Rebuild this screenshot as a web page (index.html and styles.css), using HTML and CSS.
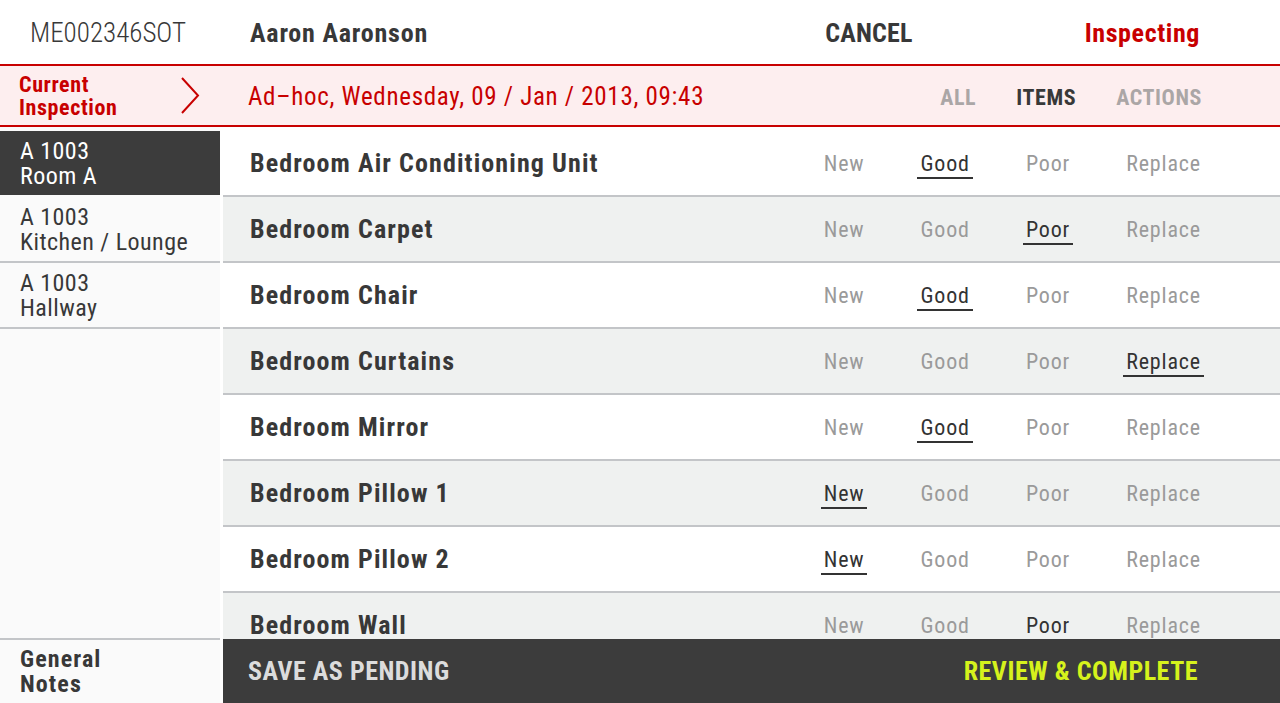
FILE: index.html
```html
<!DOCTYPE html>
<html lang="en">
<head>
    <meta charset="UTF-8">
    <meta name="viewport" content="width=device-width, initial-scale=1.0">
    <title>Inspection - Room A</title>
    <link rel="stylesheet" href="styles.css">
</head>
<body>
<div class="app">
    <header class="topbar">
        <div class="ref">ME002346SOT</div>
        <div class="tenant">Aaron Aaronson</div>
        <div class="cancel">CANCEL</div>
        <div class="status">Inspecting</div>
    </header>

    <div class="band">
        <div class="current">
            <span>Current<br>Inspection</span>
            <svg class="chevron" width="19" height="37" viewBox="0 0 19 37">
                <polyline points="1,1 17,18.5 1,36" fill="none" stroke="#c80000" stroke-width="2"/>
            </svg>
        </div>
        <div class="date">Ad&ndash;hoc, Wednesday, 09 / Jan / 2013, 09:43</div>
        <nav class="tabs">
            <span>ALL</span>
            <span class="on">ITEMS</span>
            <span>ACTIONS</span>
        </nav>
    </div>

    <div class="body">
        <aside class="rooms">
            <ul class="room-list">
                <li class="room active">A 1003<br>Room A</li>
                <li class="room">A 1003<br>Kitchen / Lounge</li>
                <li class="room">A 1003<br>Hallway</li>
            </ul>
            <div class="notes">General<br>Notes</div>
        </aside>

        <main class="items">
            <ul class="item-list">
                <li class="item">
                    <span class="name">Bedroom Air Conditioning Unit</span>
                    <span class="opts"><span>New</span><span class="sel">Good</span><span>Poor</span><span>Replace</span></span>
                </li>
                <li class="item">
                    <span class="name">Bedroom Carpet</span>
                    <span class="opts"><span>New</span><span>Good</span><span class="sel">Poor</span><span>Replace</span></span>
                </li>
                <li class="item">
                    <span class="name">Bedroom Chair</span>
                    <span class="opts"><span>New</span><span class="sel">Good</span><span>Poor</span><span>Replace</span></span>
                </li>
                <li class="item">
                    <span class="name">Bedroom Curtains</span>
                    <span class="opts"><span>New</span><span>Good</span><span>Poor</span><span class="sel">Replace</span></span>
                </li>
                <li class="item">
                    <span class="name">Bedroom Mirror</span>
                    <span class="opts"><span>New</span><span class="sel">Good</span><span>Poor</span><span>Replace</span></span>
                </li>
                <li class="item">
                    <span class="name">Bedroom Pillow 1</span>
                    <span class="opts"><span class="sel">New</span><span>Good</span><span>Poor</span><span>Replace</span></span>
                </li>
                <li class="item">
                    <span class="name">Bedroom Pillow 2</span>
                    <span class="opts"><span class="sel">New</span><span>Good</span><span>Poor</span><span>Replace</span></span>
                </li>
                <li class="item">
                    <span class="name">Bedroom Wall</span>
                    <span class="opts"><span>New</span><span>Good</span><span class="picked">Poor</span><span>Replace</span></span>
                </li>
            </ul>
            <footer class="actions">
                <span class="pending">SAVE AS PENDING</span>
                <span class="complete">REVIEW &amp; COMPLETE</span>
            </footer>
        </main>
    </div>
</div>
</body>
</html>
```

FILE: styles.css
```css
body {
    margin: 0;
    font-family: "Roboto Condensed", "Liberation Sans Narrow", "Arial Narrow", Roboto, sans-serif;
    color: #383838;
    background: #fff;
}
ul {
    list-style-type: none;
    margin: 0;
    padding: 0;
}
.app {
    height: 100vh;
    display: grid;
    grid-template-rows: 64px 63px 1fr;
    overflow: hidden;
}

/* top bar */
.topbar {
    display: flex;
    align-items: center;
    font-size: 26px;
    padding: 2px 80px 0 0;
}
.ref {
    width: 223px;
    padding-left: 30px;
    box-sizing: border-box;
    font-weight: 300;
    font-size: 27px;
}
.tenant {
    flex: 1;
    padding-left: 27px;
    font-weight: bold;
    letter-spacing: 0.8px;
}
.cancel {
    font-weight: bold;
    letter-spacing: 0.2px;
}
.status {
    margin-left: 172px;
    color: #c80000;
    font-weight: bold;
    letter-spacing: 0.6px;
}

/* red band */
.band {
    display: flex;
    align-items: center;
    background: #fdeeef;
    border-top: 2px solid #c80000;
    border-bottom: 2px solid #c80000;
    color: #c80000;
    padding-right: 78px;
}
.current {
    width: 220px;
    box-sizing: border-box;
    padding: 0 20px 0 19px;
    display: flex;
    align-items: center;
    justify-content: space-between;
    font-weight: bold;
    font-size: 22px;
    line-height: 23px;
    letter-spacing: 0.6px;
}
.date {
    flex: 1;
    padding: 1px 0 0 28px;
    font-size: 25px;
    letter-spacing: 0.7px;
}
.tabs {
    display: flex;
    gap: 40px;
    padding-top: 3px;
    font-size: 22px;
    font-weight: bold;
    letter-spacing: 0.6px;
    color: #aba6a6;
}
.tabs .on {
    color: #383838;
}

/* body */
.body {
    display: grid;
    grid-template-columns: 220px 1fr;
    column-gap: 3px;
    min-height: 0;
}
.rooms {
    background: #fafafa;
    display: flex;
    flex-direction: column;
    padding-top: 4px;
}
.room {
    height: 66px;
    box-sizing: border-box;
    padding: 8px 0 0 20px;
    font-size: 24px;
    line-height: 25.4px;
    letter-spacing: 0.45px;
    border-bottom: 2px solid #c3c5c8;
}
.room.active {
    background: #3c3c3c;
    color: #fff;
    border-bottom-color: #fafafa;
}
.notes {
    margin-top: auto;
    height: 65px;
    box-sizing: border-box;
    border-top: 2px solid #c3c5c8;
    padding: 7px 0 0 20px;
    font-size: 24px;
    line-height: 25.4px;
    letter-spacing: 1.1px;
    font-weight: bold;
}

.items {
    display: flex;
    flex-direction: column;
    min-height: 0;
}
.item-list {
    flex: 1;
    overflow: hidden;
    padding-top: 4px;
}
.item {
    height: 66px;
    box-sizing: border-box;
    border-bottom: 2px solid #c3c5c8;
    display: flex;
    align-items: center;
    padding: 0 76px 0 27px;
}
.item:nth-child(even) {
    background: #eff1f0;
}
.name {
    flex: 1;
    font-size: 26px;
    font-weight: bold;
    letter-spacing: 1.1px;
}
.opts {
    display: flex;
    gap: 50px;
    padding-top: 2px;
    font-size: 22px;
    letter-spacing: 0.85px;
    color: #9a9a9a;
}
.opts span {
    padding: 4px 3px 2px;
    border-bottom: 2px solid transparent;
    line-height: 22px;
}
.opts .sel,
.opts .picked {
    color: #333;
}
.opts .sel {
    border-bottom-color: #333;
}

.actions {
    height: 64px;
    background: #3c3c3c;
    display: flex;
    align-items: center;
    justify-content: space-between;
    padding: 0 82px 0 25px;
    font-size: 26px;
    font-weight: bold;
    letter-spacing: 0.5px;
}
.pending {
    color: #dcdcdc;
}
.complete {
    color: #d6f21c;
}
```
